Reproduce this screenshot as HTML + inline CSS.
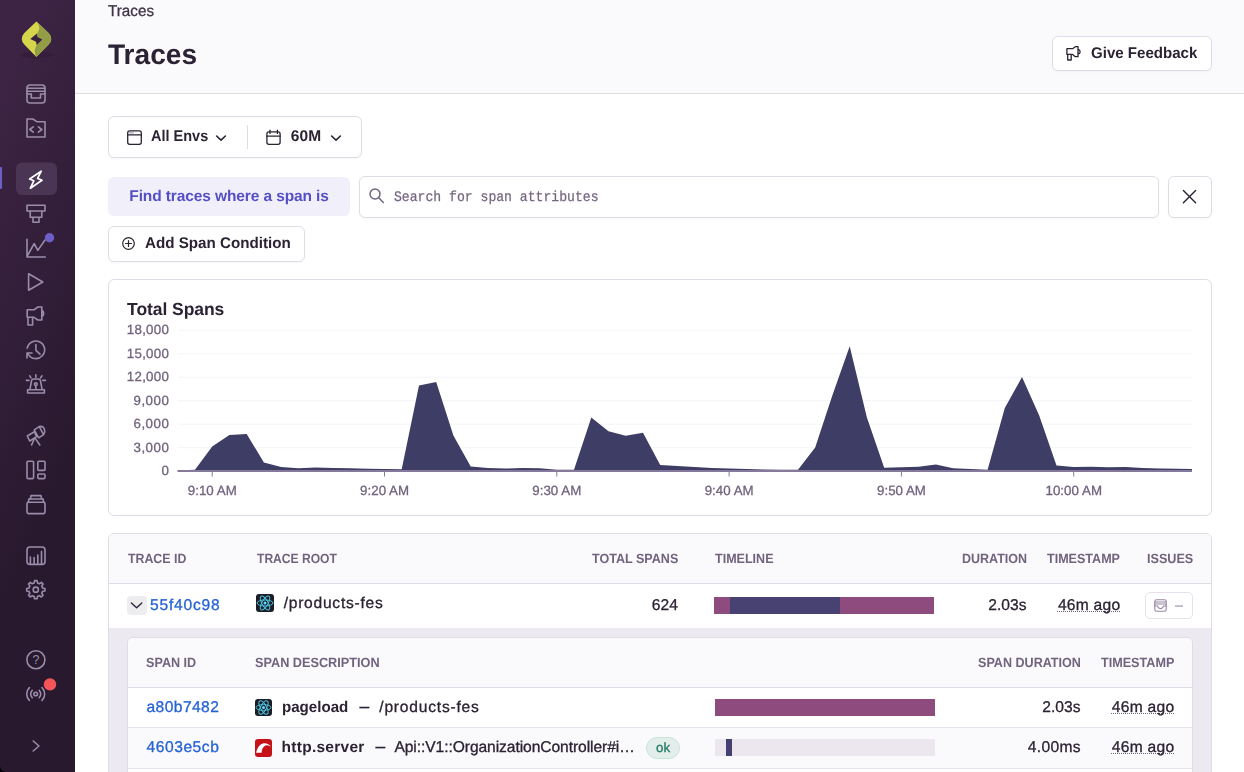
<!DOCTYPE html>
<html lang="en">
<head>
<meta charset="utf-8">
<title>Traces</title>
<style>
*{box-sizing:border-box;margin:0;padding:0}
html,body{width:1244px;height:772px;overflow:hidden;background:#fff}
body{font-family:"Liberation Sans",sans-serif;color:#2b2233;position:relative;font-size:16px}
.abs{position:absolute}
.t{position:absolute;white-space:nowrap;line-height:1;text-rendering:geometricPrecision}
#sidebar{position:absolute;left:0;top:0;width:75px;height:772px;background:linear-gradient(294.17deg,#29192e 35.57%,#3d2445 92.42%)}
#header{position:absolute;left:75px;top:0;width:1169px;height:94px;background:#faf9fb;border-bottom:1px solid #e0dce5}
.btn{position:absolute;background:#fff;border:1px solid #e0dce5;border-radius:6px;box-shadow:0 1px 2px rgba(43,34,51,.04)}
.b{font-weight:bold}
.sub{color:#71637e}
.link{color:#2562d4}
.hd{font-weight:bold;color:#71637e;font-size:12.5px;letter-spacing:.2px}
.ts{text-decoration:underline dotted #71637e;text-decoration-thickness:1px;text-underline-offset:1px}
#texts{position:absolute;left:0;top:0;width:1244px;height:772px;will-change:transform}
svg{position:absolute;overflow:visible}
.ico{fill:none;stroke:#9a8daa;stroke-width:1.6;stroke-linecap:round;stroke-linejoin:round}
</style>
</head>
<body>
<!-- SIDEBAR -->
<div id="sidebar"></div>
<svg class="abs" style="left:0;top:0" width="75" height="772" viewBox="0 0 75 772">
  <!-- logo -->
  <ellipse cx="36.5" cy="55" rx="16" ry="3.5" fill="#2a1631" opacity=".35"/>
  <path d="M36.4 21.6 L48.6 33 Q51.2 35.8 51.2 38.9 Q51.2 42 48.6 44.6 L36.4 57.1 L24.3 44.6 Q21.8 42 21.8 38.9 Q21.8 35.8 24.3 33 Z" fill="#d6d64c"/>
  <path d="M36.4 21.6 L48.6 33 Q51.2 35.8 51.2 38.9 Q51.2 42 48.6 44.6 L36.4 57.1 Q34 52.5 35 48.9 Q36 46 37 44 L37.2 33.5 Q39.8 30 39.3 27 Q38.6 24 36.4 21.6 Z" fill="#929d45"/>
  <path d="M30.3 39.1 L36.9 33.5 L37.4 36.9 L42.3 39.4 L36.7 45.1 L36 41.8 Z" fill="#39223f"/>
  <!-- active item -->
  <rect x="0" y="167" width="2" height="22" rx="1" fill="#6c5fc7"/>
  <rect x="-2" y="167" width="3" height="22" fill="#6c5fc7"/>
  <rect x="16" y="162.5" width="41" height="32.5" rx="6" fill="#4a3555"/>
  <g class="ico">
    <!-- issues -->
    <rect x="27" y="85" width="18" height="18" rx="3"/>
    <path d="M27 88.3H45M27 91.2H45M27 94H31.3V98H40.5V94H45"/>
    <!-- projects -->
    <path d="M27 119H32.8L37.2 121.8H45V137H27Z"/>
    <path d="M33.2 126.8L29.8 129.5L33.2 132.2M38.4 126.8L41.8 129.5L38.4 132.2"/>
    <!-- funnel -->
    <path d="M27 205.3H45V211H27ZM30.2 211V217.2H41.8V211M33 217.2V222.3H39V217.2"/>
    <!-- chart line -->
    <path d="M27 239.3V257H45.3M27.5 255.5L34.2 243.6L37.8 250.4L45 240"/>
    <!-- play -->
    <path d="M28.6 273.8V290.2L42.8 282Z"/>
    <!-- megaphone -->
    <path d="M27.2 309.8H34L37.8 307H41.8V320H37.8L34 317.3H27.2ZM41.8 310.6A3 3 0 0 1 41.8 316.2M28 317.3V325H32.6V317.3"/>
    <!-- history -->
    <path d="M27.2 348.2A8.8 8.8 0 1 1 28.3 354.3M27 358V353H32M35.9 344.6V350.3L40 354.2"/>
    <!-- siren -->
    <path d="M27.6 389.8H44.4V393H27.6ZM29.8 389.8L31.6 380.5Q32 379 33.6 379H38.4Q40 379 40.4 380.5L42.2 389.8M35.8 374.8V377.2M29.8 375.8L31 377.8M42 375.8L40.7 377.8M26.4 380.4H29M42.8 380.4H45.4M35.8 385.6V389.8"/>
    <circle cx="35.8" cy="384.1" r="1.4"/>
    <!-- telescope -->
    <path d="M34.2 429.9L39.2 426.6L43.6 434.6L38.7 437.8ZM39.2 426.6Q43 425.5 44.3 428.7Q45.5 431.5 43.6 434.6M27.3 436L34.3 431.7L36.6 436.6L29.7 441ZM34 439.2L31.6 445M35.4 438.6L39.8 445"/>
    <!-- dashboard -->
    <rect x="27" y="461.2" width="6.6" height="17.4" rx="1"/>
    <rect x="37.8" y="461.2" width="7.2" height="9.2" rx="1"/>
    <rect x="37.8" y="474" width="7.2" height="4.6" rx="1"/>
    <!-- releases -->
    <rect x="27" y="502.3" width="18" height="11.3" rx="1.5"/>
    <path d="M28.3 502.3L28.9 499H43.1L43.7 502.3M30.4 499L31 495.6H41L41.6 499"/>
    <!-- stats -->
    <rect x="27" y="547" width="18" height="17.4" rx="3"/>
    <path d="M30.4 557V564M34.1 557.5V564M37.8 555V564M41.5 551.5V564"/>
    <!-- settings -->
    <path d="M34.17 582.89 L34.58 580.58 L37.02 580.58 L37.43 582.89 L39.46 583.73 L41.38 582.39 L43.11 584.12 L41.77 586.04 L42.61 588.07 L44.92 588.48 L44.92 590.92 L42.61 591.33 L41.77 593.36 L43.11 595.28 L41.38 597.01 L39.46 595.67 L37.43 596.51 L37.02 598.82 L34.58 598.82 L34.17 596.51 L32.14 595.67 L30.22 597.01 L28.49 595.28 L29.83 593.36 L28.99 591.33 L26.68 590.92 L26.68 588.48 L28.99 588.07 L29.83 586.04 L28.49 584.12 L30.22 582.39 L32.14 583.73Z"/>
    <circle cx="35.8" cy="589.7" r="2.6"/>
    <!-- help -->
    <circle cx="35.9" cy="659.7" r="9"/>
    <!-- broadcast -->
    <circle cx="35.7" cy="694" r="1.8"/>
    <path d="M32.2 690.4A5 5 0 0 0 32.2 697.6M39.2 690.4A5 5 0 0 1 39.2 697.6M29.4 687.6A9 9 0 0 0 29.4 700.4M42 687.6A9 9 0 0 1 42 700.4"/>
    <!-- collapse -->
    <path d="M33.2 741L39 746L33.2 751"/>
  </g>
  <text x="35.9" y="664.2" text-anchor="middle" font-size="12.5" fill="#9a8daa" font-family="Liberation Sans, sans-serif">?</text>
  <!-- active lightning -->
  <path d="M41.2 171.2L29.6 179L33.8 180.8L30.4 188.2L42 180.2L37.6 178.4Z" fill="none" stroke="#fff" stroke-width="1.7" stroke-linejoin="round"/>
  <circle cx="49.5" cy="237.8" r="4.7" fill="#6c5fc7"/>
  <circle cx="50" cy="684.4" r="6.2" fill="#f55459"/>
</svg>
<!-- HEADER -->
<div id="header"></div>
<div class="btn" style="left:1052px;top:36px;width:160px;height:35px"></div>

<!-- FILTERS -->
<div class="btn" style="left:108px;top:116px;width:254px;height:42px"></div>
<div class="abs" style="left:247px;top:125px;width:1px;height:24px;background:#e0dce5"></div>

<div class="abs" style="left:108px;top:177px;width:242px;height:39px;background:#f1effa;border-radius:6px"></div>
<div class="btn" style="left:359px;top:176px;width:800px;height:42px"></div>
<div class="btn" style="left:1168px;top:176px;width:44px;height:42px"></div>
<div class="btn" style="left:108px;top:226px;width:197px;height:36px"></div>

<!-- CHART -->
<div class="abs" style="left:108px;top:279px;width:1104px;height:237px;border:1px solid #e0dce5;border-radius:6px;background:#fff"></div>

<svg class="abs" style="left:0;top:0" width="1244" height="772" viewBox="0 0 1244 772">
<rect x="178" y="329.7" width="1014" height="1" fill="#f4f3f6"/><rect x="178" y="353.2" width="1014" height="1" fill="#f4f3f6"/><rect x="178" y="376.7" width="1014" height="1" fill="#f4f3f6"/><rect x="178" y="400.2" width="1014" height="1" fill="#f4f3f6"/><rect x="178" y="423.7" width="1014" height="1" fill="#f4f3f6"/><rect x="178" y="447.2" width="1014" height="1" fill="#f4f3f6"/>
<clipPath id="cc"><rect x="177.5" y="320" width="1014.5" height="152"/></clipPath>
<polygon clip-path="url(#cc)" points="177.7,471.1 177.7,470.6 195.0,469.8 212.2,446.4 229.4,435.1 246.7,433.9 263.9,462.6 281.1,467.1 298.4,468.3 315.6,467.5 332.8,467.9 350.0,468.3 367.3,468.7 384.5,469.0 401.7,469.3 419.0,385.6 436.2,382.1 453.4,435.5 470.7,466.5 487.9,468.0 505.1,468.6 522.3,468.0 539.6,468.3 556.8,469.7 574.0,469.8 591.3,417.4 608.5,431.2 625.7,435.7 643.0,432.8 660.2,465.1 677.4,466.1 694.6,466.9 711.9,467.9 729.1,468.4 746.3,469.0 763.6,469.5 780.8,469.7 798.0,469.8 815.2,447.6 832.5,394.9 849.7,346.2 866.9,417.6 884.2,467.7 901.4,467.2 918.6,466.8 935.9,464.4 953.1,468.3 970.3,469.0 987.6,469.8 1004.8,408.0 1022.0,377.1 1039.2,415.5 1056.5,465.6 1073.7,467.0 1090.9,466.7 1108.2,467.3 1125.4,466.9 1142.6,467.9 1159.8,468.4 1177.1,468.7 1194.3,469.0 1194.3,471.1" fill="#3d3d66"/>
<rect x="177.5" y="470" width="1014.5" height="2" fill="#857a9b"/>
<rect x="211.7" y="472" width="1" height="4.5" fill="#857a9b"/><rect x="384.0" y="472" width="1" height="4.5" fill="#857a9b"/><rect x="556.3" y="472" width="1" height="4.5" fill="#857a9b"/><rect x="728.6" y="472" width="1" height="4.5" fill="#857a9b"/><rect x="900.9" y="472" width="1" height="4.5" fill="#857a9b"/><rect x="1073.2" y="472" width="1" height="4.5" fill="#857a9b"/>
</svg>
<!-- TABLE -->
<div class="abs" style="left:108px;top:533px;width:1104px;height:260px;border:1px solid #e0dce5;border-radius:6px 6px 0 0;background:#fff;overflow:hidden">
  <div class="abs" style="left:0;top:0;width:1104px;height:50px;background:#faf9fb;border-bottom:1px solid #e0dce5"></div>
  <div class="abs" style="left:0;top:94px;width:1104px;height:200px;background:#ede9f1"></div>
</div>
<div class="abs" style="left:127px;top:637px;width:1066px;height:160px;border:1px solid #e0dce5;border-radius:6px 6px 0 0;background:#fff;overflow:hidden">
  <div class="abs" style="left:0;top:0;width:1066px;height:50px;background:#faf9fb;border-bottom:1px solid #e0dce5"></div>
  <div class="abs" style="left:0;top:89px;width:1066px;height:1px;background:#e7e3ec"></div>
  <div class="abs" style="left:0;top:90px;width:1066px;height:40px;background:#faf9fb"></div>
  <div class="abs" style="left:0;top:130px;width:1066px;height:1px;background:#e7e3ec"></div>
</div>
<!-- expand btn -->
<div class="abs" style="left:127px;top:596px;width:20px;height:19px;background:#ededf0;border-radius:4px"></div>
<svg class="abs" style="left:256px;top:594px" width="18" height="18" viewBox="0 0 18 18">
<rect width="18" height="18" rx="3" fill="#1b1e25"/>
<g fill="none" stroke="#4fc1e0" stroke-width="1">
<ellipse cx="9.0" cy="9.0" rx="7.92" ry="3.06"/>
<ellipse cx="9.0" cy="9.0" rx="7.92" ry="3.06" transform="rotate(60 9.0 9.0)"/>
<ellipse cx="9.0" cy="9.0" rx="7.92" ry="3.06" transform="rotate(120 9.0 9.0)"/>
</g>
<circle cx="9.0" cy="9.0" r="1.5" fill="#62dafb"/>
</svg>

<!-- timeline -->
<div class="abs" style="left:714px;top:597px;width:220px;height:17px;background:#8e4b7d"></div>
<div class="abs" style="left:730px;top:597px;width:110px;height:17px;background:#484272"></div>
<!-- issues btn -->
<div class="abs" style="left:1145px;top:592px;width:48px;height:27px;border:1px solid #e6e1ec;border-radius:5px;background:#fff"></div>
<!-- inner rows -->
<svg class="abs" style="left:255px;top:699px" width="17" height="17" viewBox="0 0 17 17">
<rect width="17" height="17" rx="3" fill="#1b1e25"/>
<g fill="none" stroke="#4fc1e0" stroke-width="1">
<ellipse cx="8.5" cy="8.5" rx="7.48" ry="2.89"/>
<ellipse cx="8.5" cy="8.5" rx="7.48" ry="2.89" transform="rotate(60 8.5 8.5)"/>
<ellipse cx="8.5" cy="8.5" rx="7.48" ry="2.89" transform="rotate(120 8.5 8.5)"/>
</g>
<circle cx="8.5" cy="8.5" r="1.5" fill="#62dafb"/>
</svg>

<div class="abs" style="left:715px;top:699px;width:220px;height:17px;background:#8e4b7d"></div>
<svg class="abs" style="left:255px;top:739px" width="17" height="18" viewBox="0 0 17 18">
<rect width="17" height="18" rx="3" fill="#c51218"/>
<path d="M1 13.7H6.6Q6.8 8.6 10.4 6.6Q13.4 5.4 16 7.8Q13.6 4 8.6 4.3Q3 5.6 1 13.7Z" fill="#fff"/>
</svg>

<div class="abs" style="left:715px;top:739px;width:220px;height:17px;background:#ece7ef"></div>
<div class="abs" style="left:726px;top:739px;width:6px;height:17px;background:#444072"></div>
<div class="abs" style="left:646px;top:737px;width:34px;height:22px;border:1px solid #c6e4da;border-radius:11px;background:#e3eeeb"></div>
<svg class="abs" style="left:0;top:0" width="1244" height="772" viewBox="0 0 1244 772" fill="none" stroke-linecap="round" stroke-linejoin="round">
<!-- give feedback megaphone -->
<g stroke="#2b2233" stroke-width="1.3">
<path d="M1066.9 48.7H1072.6L1075.3 46.7H1078V56.7H1075.3L1072.6 54.4H1066.9ZM1078.2 49.3A2.4 2.4 0 0 1 1078.2 54M1067.7 54.4V60H1071.2V54.4"/>
<!-- window icon -->
<rect x="127.7" y="130.9" width="13.6" height="13.4" rx="2"/>
<path d="M127.7 134.8H141.3"/>
<!-- chevrons -->
<path d="M216.6 136L221 140.2L225.4 136" stroke-width="1.6"/>
<path d="M331.6 136L336 140.2L340.4 136" stroke-width="1.6"/>
<!-- calendar -->
<rect x="266.9" y="131.9" width="13.2" height="12.4" rx="2"/>
<path d="M266.9 136.2H280.1M270 130.2V133.4M277.4 130.2V133.4"/>
<!-- X -->
<path d="M1183.4 190.6L1195.6 202.8M1195.6 190.6L1183.4 202.8" stroke-width="1.4"/>
<!-- plus circle -->
<circle cx="128.5" cy="243.5" r="5.8" stroke-width="1.2"/>
<path d="M125.5 243.5H131.5M128.5 240.5V246.5" stroke-width="1.2"/>
<!-- expand chevron -->
<path d="M131.4 603L136.6 607.8L141.8 603" stroke-width="1.3"/>
</g>
<path d="M129.6 132.9H133.4" stroke="#9a8daa" stroke-width="1"/>
<!-- search icon -->
<g stroke="#71637e" stroke-width="1.5">
<circle cx="375" cy="194" r="5"/>
<path d="M378.8 197.8L383.3 202.4"/>
</g>
<!-- issues mini icon -->
<g stroke="#9487a3" stroke-width="1.1">
<rect x="1154.8" y="599.8" width="11.4" height="11.4" rx="1.8"/>
<path d="M1154.8 602H1166.2M1154.8 604H1166.2M1154.8 606H1157.6Q1158 608.6 1160.5 608.6Q1163 608.6 1163.4 606H1166.2"/>
</g>
<rect x="1175" y="605.3" width="8" height="1.5" fill="#b3a9c0"/>
</svg>
<svg class="abs" style="left:0;top:766px" width="6" height="6" viewBox="0 0 6 6"><path d="M0 0A6 6 0 0 0 6 6L0 6Z" fill="#000"/></svg>
<div id="texts">
<div class="t" style="left:108.4px;top:4px;font-size:15.6px;color:#3e3446;-webkit-text-stroke:0.3px;transform:scaleX(0.9771);transform-origin:0 0;">Traces</div>
<div class="t" style="left:108.4px;top:41px;font-size:28.4px;color:#2b2233;font-weight:bold;transform:scaleX(0.9891);transform-origin:0 0;">Traces</div>
<div class="t" style="left:1091.0px;top:46px;font-size:15.5px;color:#2b2233;font-weight:bold;transform:scaleX(0.9715);transform-origin:0 0;">Give Feedback</div>
<div class="t" style="left:151.0px;top:129px;font-size:15.5px;color:#2b2233;font-weight:bold;transform:scaleX(0.9351);transform-origin:0 0;">All Envs</div>
<div class="t" style="left:290.8px;top:129px;font-size:15.5px;color:#2b2233;font-weight:bold;letter-spacing:0.07px;">60M</div>
<div class="t" style="left:129.3px;top:189px;font-size:15.5px;color:#554fc6;font-weight:bold;letter-spacing:-0.11px;">Find traces where a span is</div>
<div class="t" style="left:393.6px;top:191px;font-size:14.5px;color:#75667f;-webkit-text-stroke:0.25px;font-family:'Liberation Mono',monospace;transform:scaleX(0.9039);transform-origin:0 0;">Search for span attributes</div>
<div class="t" style="left:144.6px;top:236px;font-size:15.5px;color:#2b2233;font-weight:bold;transform:scaleX(0.9788);transform-origin:0 0;">Add Span Condition</div>
<div class="t" style="left:127.1px;top:301px;font-size:17.5px;color:#2b2233;font-weight:bold;letter-spacing:-0.07px;">Total Spans</div>
<div class="t" style="left:126.8px;top:323px;font-size:13.3px;color:#71637e;-webkit-text-stroke:0.3px;letter-spacing:0.27px;">18,000</div>
<div class="t" style="left:126.8px;top:347px;font-size:13.3px;color:#71637e;-webkit-text-stroke:0.3px;letter-spacing:0.27px;">15,000</div>
<div class="t" style="left:126.8px;top:370px;font-size:13.3px;color:#71637e;-webkit-text-stroke:0.3px;letter-spacing:0.27px;">12,000</div>
<div class="t" style="left:133.5px;top:394px;font-size:13.3px;color:#71637e;-webkit-text-stroke:0.3px;letter-spacing:0.50px;">9,000</div>
<div class="t" style="left:133.5px;top:417px;font-size:13.3px;color:#71637e;-webkit-text-stroke:0.3px;letter-spacing:0.50px;">6,000</div>
<div class="t" style="left:133.5px;top:441px;font-size:13.3px;color:#71637e;-webkit-text-stroke:0.3px;letter-spacing:0.50px;">3,000</div>
<div class="t" style="left:161.4px;top:464px;font-size:13.3px;color:#71637e;-webkit-text-stroke:0.3px;">0</div>
<div class="t" style="left:187.8px;top:484px;font-size:13.3px;color:#71637e;-webkit-text-stroke:0.3px;letter-spacing:0.02px;">9:10 AM</div>
<div class="t" style="left:360.1px;top:484px;font-size:13.3px;color:#71637e;-webkit-text-stroke:0.3px;letter-spacing:0.02px;">9:20 AM</div>
<div class="t" style="left:532.3px;top:484px;font-size:13.3px;color:#71637e;-webkit-text-stroke:0.3px;letter-spacing:0.02px;">9:30 AM</div>
<div class="t" style="left:704.7px;top:484px;font-size:13.3px;color:#71637e;-webkit-text-stroke:0.3px;letter-spacing:0.02px;">9:40 AM</div>
<div class="t" style="left:877.0px;top:484px;font-size:13.3px;color:#71637e;-webkit-text-stroke:0.3px;letter-spacing:0.02px;">9:50 AM</div>
<div class="t" style="left:1045.5px;top:484px;font-size:13.3px;color:#71637e;-webkit-text-stroke:0.3px;letter-spacing:0.04px;">10:00 AM</div>
<div class="t" style="left:127.5px;top:552px;font-size:13.3px;color:#71637e;font-weight:bold;transform:scaleX(0.9284);transform-origin:0 0;">TRACE ID</div>
<div class="t" style="left:256.9px;top:552px;font-size:13.3px;color:#71637e;font-weight:bold;transform:scaleX(0.9089);transform-origin:0 0;">TRACE ROOT</div>
<div class="t" style="left:592.1px;top:552px;font-size:13.3px;color:#71637e;font-weight:bold;transform:scaleX(0.9445);transform-origin:0 0;">TOTAL SPANS</div>
<div class="t" style="left:714.5px;top:552px;font-size:13.3px;color:#71637e;font-weight:bold;transform:scaleX(0.9426);transform-origin:0 0;">TIMELINE</div>
<div class="t" style="left:961.5px;top:552px;font-size:13.3px;color:#71637e;font-weight:bold;transform:scaleX(0.9409);transform-origin:0 0;">DURATION</div>
<div class="t" style="left:1047.1px;top:552px;font-size:13.3px;color:#71637e;font-weight:bold;transform:scaleX(0.9440);transform-origin:0 0;">TIMESTAMP</div>
<div class="t" style="left:1146.7px;top:552px;font-size:13.3px;color:#71637e;font-weight:bold;transform:scaleX(0.9491);transform-origin:0 0;">ISSUES</div>
<div class="t" style="left:150.1px;top:598px;font-size:15.6px;color:#2562d4;-webkit-text-stroke:0.3px;letter-spacing:0.76px;">55f40c98</div>
<div class="t" style="left:283.7px;top:596px;font-size:15.6px;color:#2b2233;-webkit-text-stroke:0.3px;letter-spacing:0.74px;">/products-fes</div>
<div class="t" style="left:651.8px;top:598px;font-size:15.6px;color:#2b2233;-webkit-text-stroke:0.3px;letter-spacing:0.03px;">624</div>
<div class="t" style="left:988.2px;top:598px;font-size:15.6px;color:#2b2233;-webkit-text-stroke:0.3px;letter-spacing:0.06px;">2.03s</div>
<div class="t ts" style="left:1057.9px;top:598px;font-size:15.6px;color:#2b2233;-webkit-text-stroke:0.3px;letter-spacing:0.25px;">46m ag<span style="letter-spacing:0">o</span></div>
<div class="t" style="left:145.8px;top:656px;font-size:13.3px;color:#71637e;font-weight:bold;transform:scaleX(0.9480);transform-origin:0 0;">SPAN ID</div>
<div class="t" style="left:254.6px;top:656px;font-size:13.3px;color:#71637e;font-weight:bold;transform:scaleX(0.9546);transform-origin:0 0;">SPAN DESCRIPTION</div>
<div class="t" style="left:977.6px;top:656px;font-size:13.3px;color:#71637e;font-weight:bold;transform:scaleX(0.9454);transform-origin:0 0;">SPAN DURATION</div>
<div class="t" style="left:1100.9px;top:656px;font-size:13.3px;color:#71637e;font-weight:bold;transform:scaleX(0.9479);transform-origin:0 0;">TIMESTAMP</div>
<div class="t" style="left:146.5px;top:700px;font-size:15.6px;color:#2562d4;-webkit-text-stroke:0.3px;letter-spacing:0.43px;">a80b7482</div>
<div class="t" style="left:281.6px;top:700px;font-size:15.5px;color:#2b2233;font-weight:bold;transform:scaleX(0.9743);transform-origin:0 0;">pageload</div>
<div class="t" style="left:359.4px;top:698px;font-size:17.5px;color:#2b2233;-webkit-text-stroke:0.3px;">–</div>
<div class="t" style="left:379.3px;top:700px;font-size:15.6px;color:#2b2233;-webkit-text-stroke:0.3px;letter-spacing:0.78px;">/products-fes</div>
<div class="t" style="left:1042.2px;top:700px;font-size:15.6px;color:#2b2233;-webkit-text-stroke:0.3px;letter-spacing:0.04px;">2.03s</div>
<div class="t ts" style="left:1111.8px;top:700px;font-size:15.6px;color:#2b2233;-webkit-text-stroke:0.3px;letter-spacing:0.29px;">46m ag<span style="letter-spacing:0">o</span></div>
<div class="t" style="left:146.5px;top:740px;font-size:15.6px;color:#2562d4;-webkit-text-stroke:0.3px;letter-spacing:0.55px;">4603e5cb</div>
<div class="t" style="left:281.6px;top:740px;font-size:15.5px;color:#2b2233;font-weight:bold;letter-spacing:0.26px;">http.server</div>
<div class="t" style="left:375.6px;top:738px;font-size:17.5px;color:#2b2233;-webkit-text-stroke:0.3px;">–</div>
<div class="t" style="left:394.4px;top:740px;font-size:15.6px;color:#2b2233;-webkit-text-stroke:0.3px;letter-spacing:-0.07px;">Api::V1::OrganizationController#i…</div>
<div class="t" style="left:655.9px;top:741px;font-size:13.3px;color:#207964;-webkit-text-stroke:0.3px;letter-spacing:0.15px;">ok</div>
<div class="t" style="left:1027.8px;top:740px;font-size:15.6px;color:#2b2233;-webkit-text-stroke:0.3px;letter-spacing:0.31px;">4.00ms</div>
<div class="t ts" style="left:1111.8px;top:740px;font-size:15.6px;color:#2b2233;-webkit-text-stroke:0.3px;letter-spacing:0.29px;">46m ag<span style="letter-spacing:0">o</span></div>
</div>
</body>
</html>
